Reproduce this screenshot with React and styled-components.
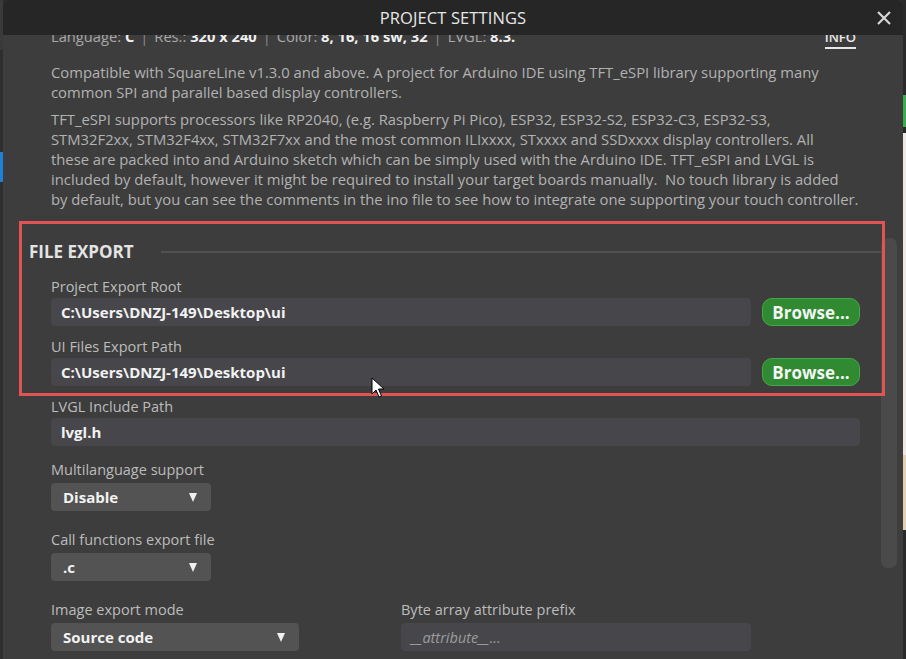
import React from "react";
import styled, { createGlobalStyle } from "styled-components";

const GlobalStyle = createGlobalStyle`
  html, body {
    margin: 0;
    padding: 0;
    background: #2b2b2b;
    font-family: "Open Sans", "Noto Sans", sans-serif;
  }
`;

const Page = styled.div`
  display: flex;
  height: 659px;
  overflow: hidden;
`;

const EdgeStrip = styled.div`
  width: 3px;
  display: flex;
  flex-direction: column;
  background: ${(p) => p.base};
`;

const Stripe = styled.div`
  height: ${(p) => p.h}px;
  background: ${(p) => p.color};
  flex-shrink: 0;
`;

const Dialog = styled.div`
  flex: 1;
  display: flex;
  flex-direction: column;
  background: #3d3d3d;
  border-radius: 6px 6px 0 0;
  overflow: hidden;
`;

const Header = styled.div`
  height: 35px;
  flex-shrink: 0;
  background: #262626;
  display: grid;
  grid-template-columns: 1fr auto 1fr;
  align-items: center;
  position: relative;
  z-index: 2;
`;

const Title = styled.div`
  grid-column: 2;
  font-size: 16.5px;
  color: #e6e6e6;
  letter-spacing: 0.1px;
`;

const CloseButton = styled.div`
  justify-self: end;
  margin-right: 11px;
  display: flex;
  align-items: center;
`;

const Body = styled.div`
  flex: 1;
  position: relative;
  overflow: hidden;
`;

const Content = styled.div`
  margin-top: -9px;
  padding: 0 43px 0 26px;
`;

const Indent = styled.div`
  padding-left: 22px;
`;

const InfoRow = styled(Indent)`
  display: flex;
  justify-content: space-between;
  align-items: baseline;
  line-height: 20px;
  height: 20px;
  font-size: 14.7px;
  color: #a8a8a8;
`;

const Strong = styled.b`
  color: #f0f0f0;
  font-weight: 700;
`;

const Sep = styled.span`
  margin: 0 6px;
  color: #8a8a8a;
`;

const InfoLink = styled.span`
  color: #e8e8e8;
  border-bottom: 2px solid #e8e8e8;
  margin-right: 4px;
  line-height: 16px;
  padding-bottom: 2px;
  font-size: 13px;
  font-weight: 600;
`;

const Paragraph = styled.p`
  margin: ${(p) => p.mt}px 0 0;
  font-size: 14.8px;
  line-height: 20px;
  color: #b2b2b2;
  white-space: nowrap;
`;

const Highlight = styled.div`
  position: relative;
  margin-top: 12px;
  padding: 21px 0 10px;

  &::after {
    content: "";
    position: absolute;
    top: 0;
    bottom: 0;
    left: -10px;
    right: -25px;
    border: 3px solid #e25454;
    pointer-events: none;
    z-index: 1;
  }
`;

const SectionHeading = styled.div`
  display: flex;
  align-items: center;
  gap: 27px;
  margin-right: -22px;
  font-size: 17px;
  font-weight: 700;
  line-height: 20px;
  color: #e4e4e4;

  &::after {
    content: "";
    flex: 1;
    height: 2px;
    background: #515151;
  }
`;

const Field = styled.div`
  margin-top: ${(p) => p.mt}px;
`;

const Label = styled.div`
  font-size: 14.5px;
  line-height: 20px;
  color: #bcbcbc;
  margin-bottom: ${(p) => p.gap}px;
`;

const Row = styled.div`
  display: flex;
  align-items: center;
  gap: 11px;
`;

const Input = styled.div`
  flex: ${(p) => (p.w ? "none" : 1)};
  width: ${(p) => (p.w ? `${p.w}px` : "auto")};
  height: 28px;
  box-sizing: border-box;
  padding: 0 10px;
  background: #47474b;
  border-radius: 4px;
  display: flex;
  align-items: center;
  font-size: 15px;
  font-weight: 700;
  color: #f2f2f2;
`;

const Placeholder = styled.span`
  font-style: italic;
  font-weight: 400;
  color: #9c9c9c;
  font-size: 14.5px;
`;

const BrowseButton = styled.div`
  width: 98px;
  height: 28px;
  box-sizing: border-box;
  border-radius: 10px;
  background: #2f8a31;
  border: 1px solid #47a649;
  display: flex;
  align-items: center;
  justify-content: center;
  font-size: 17px;
  font-weight: 700;
  color: #f4f4f4;
`;

const Select = styled.div`
  width: ${(p) => p.w}px;
  height: 28px;
  box-sizing: border-box;
  padding: 0 14px 0 12px;
  background: #535353;
  border-radius: 4px;
  display: flex;
  align-items: center;
  justify-content: space-between;
  font-size: 15px;
  font-weight: 700;
  color: #f2f2f2;
`;

const SplitRow = styled.div`
  display: flex;
  gap: 102px;
  margin-top: 19px;
`;

const Scrollbar = styled.div`
  position: absolute;
  right: 6px;
  top: 203px;
  width: 16px;
  height: 330px;
  border-radius: 7px;
  background: #4a4a4a;
`;

const Pointer = styled.svg`
  position: absolute;
  left: 368px;
  top: 342px;
  z-index: 3;
`;

const Arrow = () => (
  <svg width="8" height="11" viewBox="0 0 8 11">
    <polygon points="0,1 8,1 4,10" fill="#f0f0f0" />
  </svg>
);

const CloseIcon = () => (
  <svg width="16" height="16" viewBox="0 0 16 16">
    <path d="M2 2 L14 14 M14 2 L2 14" stroke="#d6d6d6" strokeWidth="2.2" />
  </svg>
);

const PathField = ({ label, value, mt }) => (
  <Field mt={mt}>
    <Label gap={1}>{label}</Label>
    <Row>
      <Input>{value}</Input>
      <BrowseButton>Browse...</BrowseButton>
    </Row>
  </Field>
);

const SelectField = ({ label, value, w, mt }) => (
  <Field mt={mt}>
    <Label gap={3}>{label}</Label>
    <Select w={w}>
      <span>{value}</span>
      <Arrow />
    </Select>
  </Field>
);

const App = () => {
  const exportPath = "C:\\Users\\DNZJ-149\\Desktop\\ui";

  return (
    <>
      <GlobalStyle />
      <Page>
        <EdgeStrip base="#2e2e2e">
          <Stripe h={50} color="#3a3a3a" />
          <Stripe h={102} color="#2e2e2e" />
          <Stripe h={30} color="#1f7fd6" />
        </EdgeStrip>

        <Dialog>
          <Header>
            <Title>PROJECT SETTINGS</Title>
            <CloseButton>
              <CloseIcon />
            </CloseButton>
          </Header>

          <Body>
            <Content>
              <InfoRow>
                <span>
                  Language: <Strong>C</Strong>
                  <Sep>|</Sep>
                  Res.: <Strong>320 x 240</Strong>
                  <Sep>|</Sep>
                  Color: <Strong>8, 16, 16 sw, 32</Strong>
                  <Sep>|</Sep>
                  LVGL: <Strong>8.3.</Strong>
                </span>
                <InfoLink>INFO</InfoLink>
              </InfoRow>

              <Indent>
                <Paragraph mt={16}>
                  Compatible with SquareLine v1.3.0 and above. A project for Arduino IDE using TFT_eSPI library supporting many
                  <br />
                  common SPI and parallel based display controllers.
                </Paragraph>
                <Paragraph mt={7}>
                  TFT_eSPI supports processors like RP2040, (e.g. Raspberry Pi Pico), ESP32, ESP32-S2, ESP32-C3, ESP32-S3,
                  <br />
                  STM32F2xx, STM32F4xx, STM32F7xx and the most common ILIxxxx, STxxxx and SSDxxxx display controllers. All
                  <br />
                  these are packed into and Arduino sketch which can be simply used with the Arduino IDE. TFT_eSPI and LVGL is
                  <br />
                  included by default, however it might be required to install your target boards manually.&nbsp; No touch library is added
                  <br />
                  by default, but you can see the comments in the ino file to see how to integrate one supporting your touch controller.
                </Paragraph>
              </Indent>

              <Highlight>
                <SectionHeading>FILE EXPORT</SectionHeading>
                <Indent>
                  <PathField label="Project Export Root" value={exportPath} mt={15} />
                  <PathField label="UI Files Export Path" value={exportPath} mt={11} />
                </Indent>
              </Highlight>

              <Indent>
                <Field mt={1}>
                  <Label gap={1}>LVGL Include Path</Label>
                  <Input>lvgl.h</Input>
                </Field>

                <SelectField label="Multilanguage support" value="Disable" w={160} mt={14} />
                <SelectField label="Call functions export file" value=".c" w={160} mt={19} />

                <SplitRow>
                  <Field mt={0}>
                    <Label gap={3}>Image export mode</Label>
                    <Select w={248}>
                      <span>Source code</span>
                      <Arrow />
                    </Select>
                  </Field>
                  <Field mt={0}>
                    <Label gap={3}>Byte array attribute prefix</Label>
                    <Input w={350}>
                      <Placeholder>__attribute__...</Placeholder>
                    </Input>
                  </Field>
                </SplitRow>
              </Indent>
            </Content>

            <Scrollbar />

            <Pointer width="14" height="22" viewBox="0 0 14 22">
              <path
                d="M1 1 L1 17 L5 13 L8 20 L10.5 19 L7.5 12 L13 12 Z"
                fill="#ffffff"
                stroke="#000000"
                strokeWidth="1"
                strokeLinejoin="round"
              />
            </Pointer>
          </Body>
        </Dialog>

        <EdgeStrip base="#2a2a2a">
          <Stripe h={95} color="#2a2a2a" />
          <Stripe h={32} color="#3cab4a" />
          <Stripe h={6} color="#2a2a2a" />
          <Stripe h={322} color="#f2e8e2" />
          <Stripe h={75} color="#e7cfb4" />
        </EdgeStrip>
      </Page>
    </>
  );
};

export default App;
